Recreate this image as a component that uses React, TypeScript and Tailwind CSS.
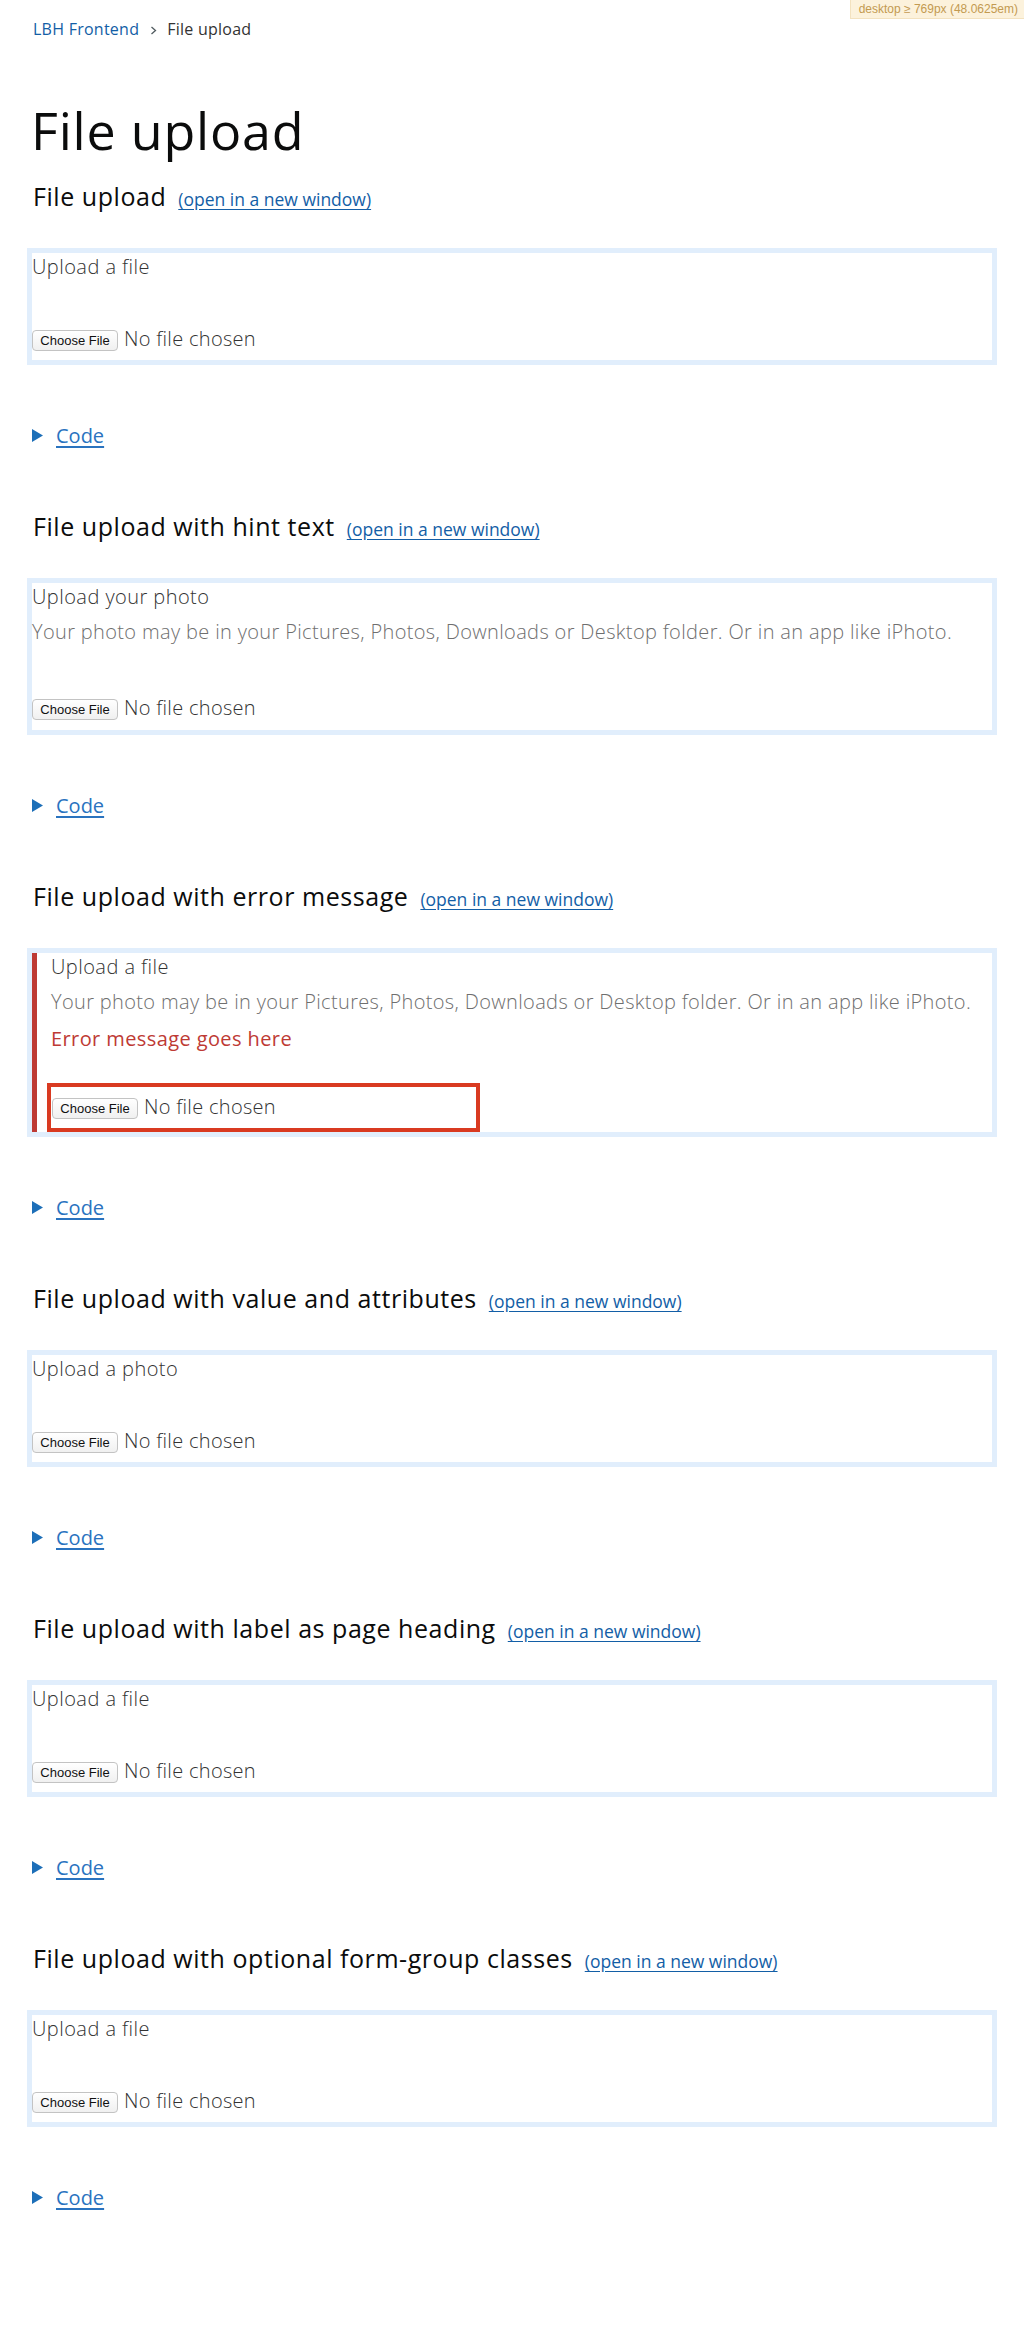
import React from 'react';

type Example = {
  title: string;
  label: string;
  hint?: string;
  error?: string;
};

const HINT = 'Your photo may be in your Pictures, Photos, Downloads or Desktop folder. Or in an app like iPhoto.';

const EXAMPLES: Example[] = [
  { title: 'File upload', label: 'Upload a file' },
  { title: 'File upload with hint text', label: 'Upload your photo', hint: HINT },
  { title: 'File upload with error message', label: 'Upload a file', hint: HINT, error: 'Error message goes here' },
  { title: 'File upload with value and attributes', label: 'Upload a photo' },
  { title: 'File upload with label as page heading', label: 'Upload a file' },
  { title: 'File upload with optional form-group classes', label: 'Upload a file' },
];

const FileControl: React.FC = () => (
  <div className="flex h-[21px] items-start">
    <span className="flex h-[21px] w-[86px] items-center justify-center rounded-[4px] border border-[#c3c3c3] bg-linear-to-b from-white to-[#f0f0f0] font-['Liberation_Sans',sans-serif] text-[13px] leading-none text-[#111]">
      Choose File
    </span>
    <span className="ml-[6px] text-[20px] font-light leading-[17px] tracking-[0.3px] text-[#333]">No file chosen</span>
  </div>
);

const ExampleBlock: React.FC<{ ex: Example; first: boolean }> = ({ ex, first }) => (
  <section className={first ? 'mt-[20px]' : 'mt-[62px]'}>
    <div className="flex items-baseline pl-[6px]">
      <h2 className="text-[25px] font-normal leading-[32px] tracking-[0.55px] text-[#0b0c0c]">{ex.title}</h2>
      <a href="#" className="ml-[12px] text-[17.5px] leading-[22px] text-[#135ea6] underline underline-offset-[3px]">
        (open in a new window)
      </a>
    </div>

    <div className="mt-[36px] border-[5px] border-[#e1eefc]">
      {ex.error ? (
        <div className="border-l-[5px] border-[#be3a34] pl-[14px]">
          <label className="block pt-[1px] text-[20px] font-light leading-[25px] tracking-[0.45px] text-[#333]">{ex.label}</label>
          <div className="mt-[10px] text-[20px] font-light leading-[25px] tracking-[0.35px] text-[#6f6f6f]">{ex.hint}</div>
          <div className="mt-[12px] text-[20px] font-medium leading-[25px] tracking-[0.4px] text-[#be3a34]">{ex.error}</div>
          <div className="ml-[-4px] mt-[32px] w-[433px] border-4 border-[#d93a21] pb-[9px] pl-[1px] pt-[11px]">
            <FileControl />
          </div>
        </div>
      ) : (
        <div className={ex.hint ? 'pb-[10px]' : 'pb-[9px]'}>
          <label className="block pt-[1px] text-[20px] font-light leading-[25px] tracking-[0.45px] text-[#333]">{ex.label}</label>
          {ex.hint && (
            <div className="mt-[10px] text-[20px] font-light leading-[25px] tracking-[0.35px] text-[#6f6f6f]">{ex.hint}</div>
          )}
          <div className={ex.hint ? 'mt-[55px]' : 'mt-[51px]'}>
            <FileControl />
          </div>
        </div>
      )}
    </div>

    <div className="mt-[58px] flex h-[25px] items-center pl-[5px]">
      <svg width="11" height="13" viewBox="0 0 11 13">
        <path d="M0 0 L11 6.5 L0 13 Z" fill="#1d6fb8" />
      </svg>
      <span className="ml-[13px] text-[20px] leading-[25px] text-[#2a73bf] underline underline-offset-[3px]">Code</span>
    </div>
  </section>
);

const App: React.FC = () => {
  return (
    <div className="relative min-h-[2337px] bg-white font-['Open_Sans',sans-serif] text-[#0b0c0c]">
      {/* breakpoint debug badge */}
      <div className="absolute right-0 top-0 h-[19px] border-b border-l border-[#f3e2bf] bg-[#fcf2dc] pl-[8px] pr-[6px] font-['Liberation_Sans',sans-serif] text-[12px] leading-[19px] text-[#c39a51]">
        desktop ≥ 769px (48.0625em)
      </div>

      <div className="px-[27px]">
        <nav className="flex items-center pl-[6px] pt-[17px] text-[16px] leading-[24px] tracking-[0.25px]">
          <a href="#" className="text-[#135ea6]">LBH Frontend</a>
          <svg className="ml-[11px] mr-[10px] mt-[2px]" width="7" height="9" viewBox="0 0 7 9">
            <path d="M1.5 1 L5.5 4.5 L1.5 8" fill="none" stroke="#505a5f" strokeWidth="1.3" />
          </svg>
          <span className="text-[#333]">File upload</span>
        </nav>

        <h1 className="ml-[4px] mt-[59px] text-[52px] font-normal leading-[60px] tracking-[0.8px] text-[#0b0c0c]">File upload</h1>

        {EXAMPLES.map((ex, i) => (
          <ExampleBlock key={ex.title} ex={ex} first={i === 0} />
        ))}
      </div>
    </div>
  );
};

export default App;
